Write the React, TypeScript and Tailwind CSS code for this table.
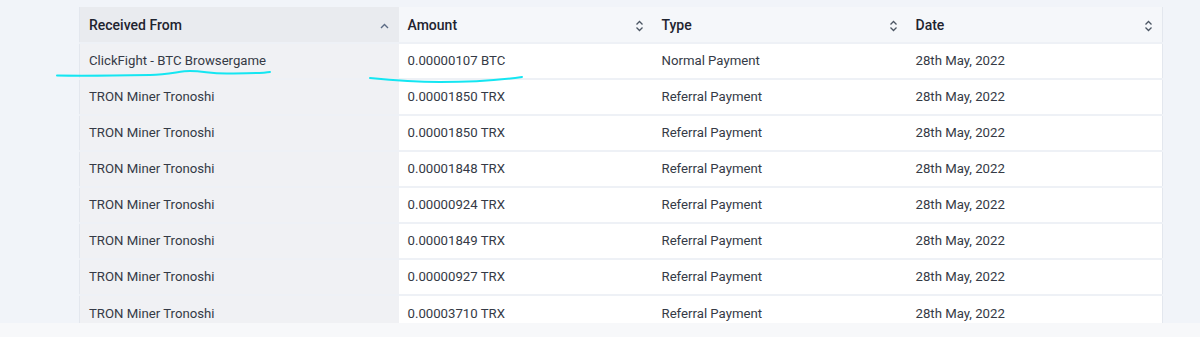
import React from "react";

type Row = { from: string; amount: string; type: string; date: string };

const rows: Row[] = [
  { from: "ClickFight - BTC Browsergame", amount: "0.00000107 BTC", type: "Normal Payment", date: "28th May, 2022" },
  { from: "TRON Miner Tronoshi", amount: "0.00001850 TRX", type: "Referral Payment", date: "28th May, 2022" },
  { from: "TRON Miner Tronoshi", amount: "0.00001850 TRX", type: "Referral Payment", date: "28th May, 2022" },
  { from: "TRON Miner Tronoshi", amount: "0.00001848 TRX", type: "Referral Payment", date: "28th May, 2022" },
  { from: "TRON Miner Tronoshi", amount: "0.00000924 TRX", type: "Referral Payment", date: "28th May, 2022" },
  { from: "TRON Miner Tronoshi", amount: "0.00001849 TRX", type: "Referral Payment", date: "28th May, 2022" },
  { from: "TRON Miner Tronoshi", amount: "0.00000927 TRX", type: "Referral Payment", date: "28th May, 2022" },
  { from: "TRON Miner Tronoshi", amount: "0.00003710 TRX", type: "Referral Payment", date: "28th May, 2022" },
];

function SortUp() {
  return (
    <svg width="9" height="6" viewBox="0 0 9 6" className="shrink-0">
      <path d="M1 5 L4.5 1.5 L8 5" fill="none" stroke="#5b6b84" strokeWidth="1.4" />
    </svg>
  );
}

function SortBoth() {
  return (
    <svg width="9" height="12" viewBox="0 0 9 12" className="shrink-0">
      <path d="M1.5 4.5 L4.5 1.5 L7.5 4.5" fill="none" stroke="#4b5563" strokeWidth="1.3" />
      <path d="M1.5 7.5 L4.5 10.5 L7.5 7.5" fill="none" stroke="#4b5563" strokeWidth="1.3" />
    </svg>
  );
}

export default function App() {
  return (
    <div className="w-[1200px] h-[337px] bg-[#f1f4f9] overflow-hidden" style={{ fontFamily: "Roboto, 'Liberation Sans', sans-serif" }}>
      {/* main area */}
      <div className="relative h-[323px] overflow-hidden pt-[7px] pl-[79px]">
        <table className="w-[1083px] table-fixed border-collapse border-x border-[#e3e7ee] text-[13.2px] text-[#353a46]">
          <colgroup>
            <col className="w-[319px]" />
            <col className="w-[254px]" />
            <col className="w-[254px]" />
            <col className="w-[256px]" />
          </colgroup>
          <thead>
            <tr className="h-[36px] text-[14px] text-[#1f2430]">
              <th className="bg-[#e9ebef] px-[9px] pt-[2px] text-left font-medium">
                <div className="flex items-center justify-between">
                  <span>Received From</span>
                  <span className="mr-[1px]"><SortUp /></span>
                </div>
              </th>
              <th className="bg-[#f5f7fa] px-[9px] pt-[2px] text-left font-medium">
                <div className="flex items-center justify-between">
                  <span>Amount</span>
                  <SortBoth />
                </div>
              </th>
              <th className="bg-[#f5f7fa] px-[9px] pt-[2px] text-left font-medium">
                <div className="flex items-center justify-between">
                  <span>Type</span>
                  <SortBoth />
                </div>
              </th>
              <th className="bg-[#f5f7fa] px-[9px] pt-[2px] text-left font-medium">
                <div className="flex items-center justify-between">
                  <span>Date</span>
                  <SortBoth />
                </div>
              </th>
            </tr>
          </thead>
          <tbody>
            {rows.map((r, i) => (
              <tr key={i} className="h-[36px] border-t-2 border-[#eef1f6]">
                <td className="bg-[#f0f1f4] px-[9px]">{r.from}</td>
                <td className="bg-white pl-[9px]">{r.amount}</td>
                <td className="bg-white pl-[9px]">{r.type}</td>
                <td className="bg-white pl-[9px]">{r.date}</td>
              </tr>
            ))}
          </tbody>
        </table>

        {/* hand-drawn highlight marks */}
        <svg className="absolute left-0 top-0 pointer-events-none" width="1200" height="323">
          <path
            d="M57 75.5 C 90 76, 120 75.5, 150 75 C 170 74.5, 180 71, 190 71 C 205 71, 210 74, 230 73.5 C 250 73, 262 73.5, 270 72"
            fill="none"
            stroke="#14e6f2"
            strokeWidth="2"
            strokeLinecap="round"
          />
          <path
            d="M370 78 C 390 80, 410 82, 440 82 C 470 82, 500 80, 522 77"
            fill="none"
            stroke="#14e6f2"
            strokeWidth="2"
            strokeLinecap="round"
          />
        </svg>
      </div>
      {/* bottom strip */}
      <div className="h-[14px] bg-[#f7f8fa]" />
    </div>
  );
}
